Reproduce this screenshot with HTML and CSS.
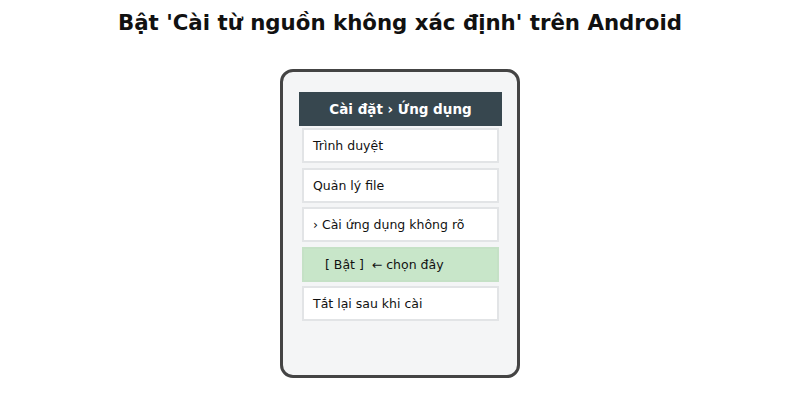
FILE: index.html
```html
<!DOCTYPE html>
<html lang="vi">
<head>
  <meta charset="UTF-8">
  <meta name="viewport" content="width=device-width, initial-scale=1.0">
  <title>Bật 'Cài từ nguồn không xác định' trên Android</title>
  <link rel="stylesheet" href="styles.css">
</head>
<body>
  <h1>Bật 'Cài từ nguồn không xác định' trên Android</h1>
  <div class="phone">
    <div class="screen-title">Cài đặt › Ứng dụng</div>
    <ul class="menu">
      <li class="row">Trình duyệt</li>
      <li class="row">Quản lý file</li>
      <li class="row">› Cài ứng dụng không rõ</li>
      <li class="row on">[ Bật ]&nbsp; ← chọn đây</li>
      <li class="row">Tắt lại sau khi cài</li>
    </ul>
  </div>
</body>
</html>
```

FILE: styles.css
```css
body { margin: 0; font-family: "DejaVu Sans", sans-serif; background: #fff; color: #111; }
h1 { margin: 0; padding-top: 9px; height: 60px; box-sizing: border-box; text-align: center; font-size: 21.3px; line-height: 28px; font-weight: bold; }
.phone { width: 240px; height: 309px; box-sizing: border-box; margin: 9px auto 0; border: 3px solid #444; border-radius: 13px; background: #f4f5f6; padding: 20px 15px 0 16px; }
.screen-title { height: 34px; line-height: 35px; background: #37474f; color: #fff; text-align: center; font-size: 13.5px; font-weight: bold; }
.menu { list-style: none; margin: 2px 3px 0; padding: 0; display: flex; flex-direction: column; gap: 4.5px; }
.row { height: 35px; line-height: 32px; box-sizing: border-box; border: 2px solid #e2e4e6; background: #fff; padding-left: 9px; font-size: 12.5px; }
.row.on { background: #c8e6c9; border-color: #c5e1c6; padding-left: 21px; }
```
